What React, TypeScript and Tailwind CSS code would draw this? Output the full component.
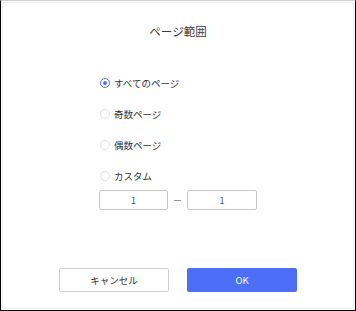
import { useState } from "react";

const Radio = ({ checked }: { checked: boolean }) => (
	<span
		className={
			checked
				? "flex h-[10px] w-[10px] items-center justify-center rounded-full border border-[#4f6ef7] bg-white"
				: "flex h-[10px] w-[10px] items-center justify-center rounded-full border border-[#e3e3e3] bg-white"
		}
	>
		{checked && <span className="h-[4px] w-[4px] rounded-full bg-[#4f6ef7]" />}
	</span>
);

const options = ["すべてのページ", "奇数ページ", "偶数ページ", "カスタム"];

export default function App() {
	const [selected, setSelected] = useState(0);

	return (
		<div
			className="h-[311px] w-[356px] border-x border-b border-t border-x-black border-b-black border-t-[#cfcfcf] bg-white p-px text-[#333]"
			style={{ fontFamily: '"Noto Sans CJK JP", "Noto Sans", sans-serif' }}
		>
			<div className="flex h-full flex-col rounded-[3px] border border-[#ececec]">
				{/* Title */}
				<div className="mt-[20px] text-center text-[11.5px] leading-[16px] text-[#3a3a3a]">
					ページ範囲
				</div>

				{/* Options */}
				<div className="ml-[97px] mt-[36px] flex flex-col gap-[15px]">
					{options.map((label, i) => (
						<div
							key={label}
							className="flex h-[16px] cursor-pointer items-center gap-[4px] text-[9.5px]"
							onClick={() => setSelected(i)}
						>
							<Radio checked={selected === i} />
							<span>{label}</span>
						</div>
					))}
				</div>

				{/* Custom range */}
				<div className="ml-[96px] mt-[6px] flex items-center">
					<input
						defaultValue="1"
						className="h-[20px] w-[69px] rounded-[2px] border border-[#c9c9c9] bg-white text-center text-[9px] text-[#555] outline-none"
					/>
					<span className="mx-[6px] h-px w-[7px] bg-[#999]" />
					<input
						defaultValue="1"
						className="h-[20px] w-[70px] rounded-[2px] border border-[#c9c9c9] bg-white text-center text-[9px] text-[#555] outline-none"
					/>
				</div>

				{/* Buttons */}
				<div className="ml-[56px] mt-[58px] flex gap-[18px]">
					<button className="h-[24px] w-[110px] rounded-[2px] border border-[#cfcfcf] bg-white text-[9.5px] text-[#333]">
						キャンセル
					</button>
					<button className="h-[24px] w-[110px] rounded-[2px] bg-[#4f6ef7] text-[9.5px] text-white">
						OK
					</button>
				</div>
			</div>
		</div>
	);
}
